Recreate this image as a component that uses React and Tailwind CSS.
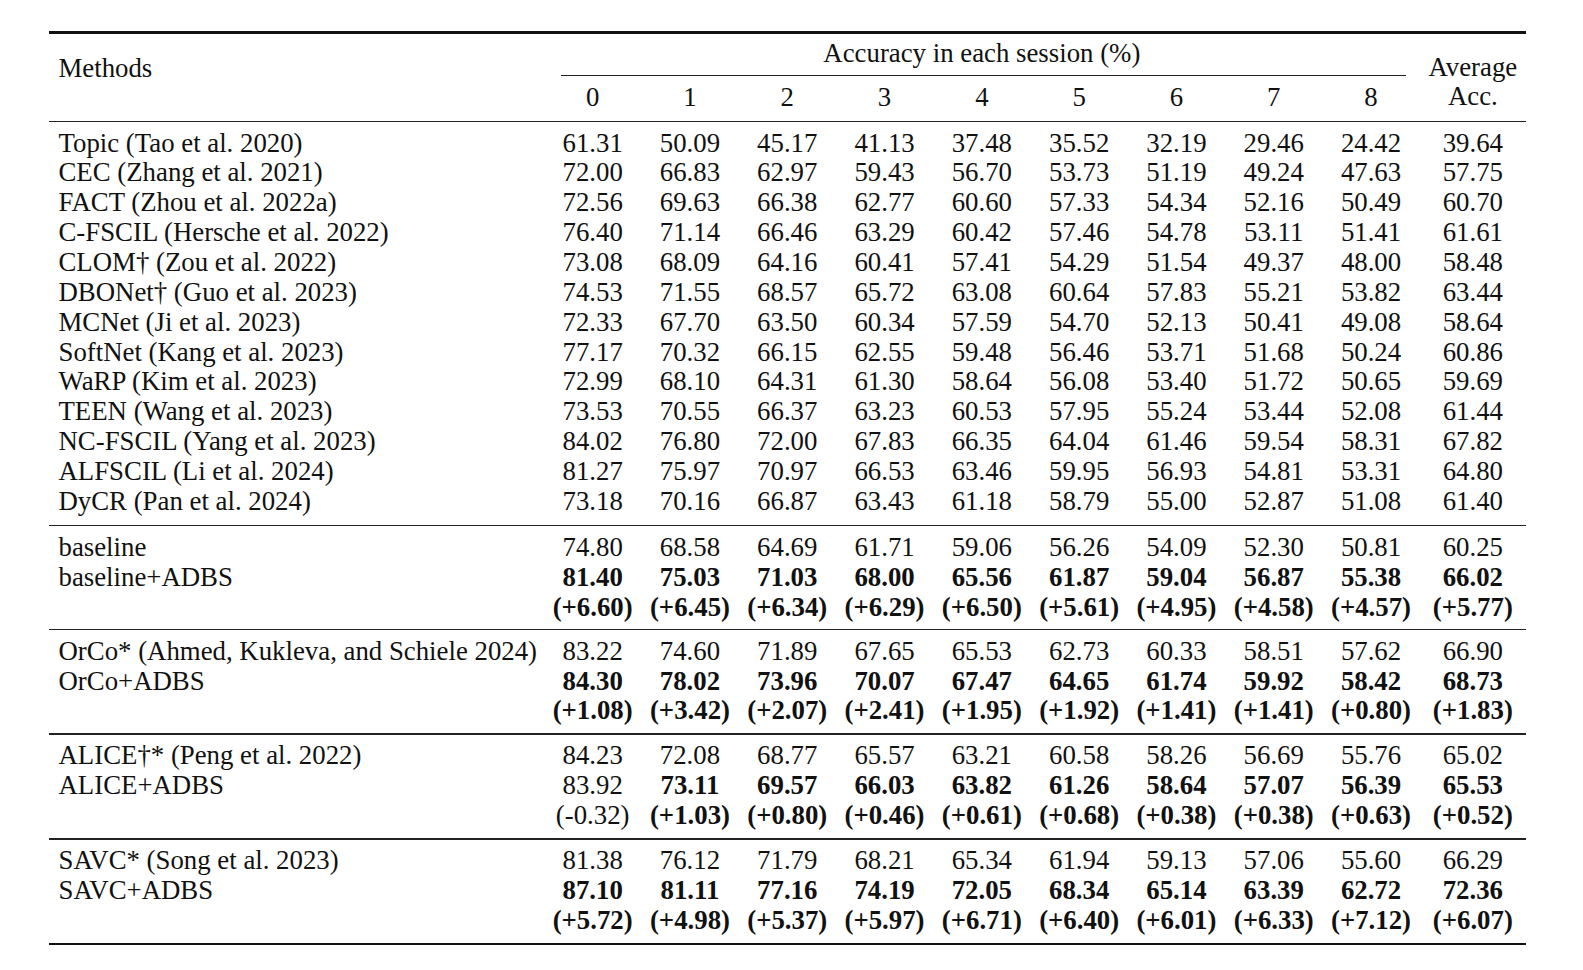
import React from 'react';

// session accuracy table, grouped in blocks separated by rules
const groups = [
  {
    pb: 'pb-[8.7px]',
    rows: [
      { name: 'Topic (Tao et al. 2020)', vals: ['61.31', '50.09', '45.17', '41.13', '37.48', '35.52', '32.19', '29.46', '24.42', '39.64'] },
      { name: 'CEC (Zhang et al. 2021)', vals: ['72.00', '66.83', '62.97', '59.43', '56.70', '53.73', '51.19', '49.24', '47.63', '57.75'] },
      { name: 'FACT (Zhou et al. 2022a)', vals: ['72.56', '69.63', '66.38', '62.77', '60.60', '57.33', '54.34', '52.16', '50.49', '60.70'] },
      { name: 'C-FSCIL (Hersche et al. 2022)', vals: ['76.40', '71.14', '66.46', '63.29', '60.42', '57.46', '54.78', '53.11', '51.41', '61.61'] },
      { name: 'CLOM† (Zou et al. 2022)', vals: ['73.08', '68.09', '64.16', '60.41', '57.41', '54.29', '51.54', '49.37', '48.00', '58.48'] },
      { name: 'DBONet† (Guo et al. 2023)', vals: ['74.53', '71.55', '68.57', '65.72', '63.08', '60.64', '57.83', '55.21', '53.82', '63.44'] },
      { name: 'MCNet (Ji et al. 2023)', vals: ['72.33', '67.70', '63.50', '60.34', '57.59', '54.70', '52.13', '50.41', '49.08', '58.64'] },
      { name: 'SoftNet (Kang et al. 2023)', vals: ['77.17', '70.32', '66.15', '62.55', '59.48', '56.46', '53.71', '51.68', '50.24', '60.86'] },
      { name: 'WaRP (Kim et al. 2023)', vals: ['72.99', '68.10', '64.31', '61.30', '58.64', '56.08', '53.40', '51.72', '50.65', '59.69'] },
      { name: 'TEEN (Wang et al. 2023)', vals: ['73.53', '70.55', '66.37', '63.23', '60.53', '57.95', '55.24', '53.44', '52.08', '61.44'] },
      { name: 'NC-FSCIL (Yang et al. 2023)', vals: ['84.02', '76.80', '72.00', '67.83', '66.35', '64.04', '61.46', '59.54', '58.31', '67.82'] },
      { name: 'ALFSCIL (Li et al. 2024)', vals: ['81.27', '75.97', '70.97', '66.53', '63.46', '59.95', '56.93', '54.81', '53.31', '64.80'] },
      { name: 'DyCR (Pan et al. 2024)', vals: ['73.18', '70.16', '66.87', '63.43', '61.18', '58.79', '55.00', '52.87', '51.08', '61.40'] },
    ],
  },
  {
    pb: 'pb-[6.75px]',
    rows: [
      { name: 'baseline', vals: ['74.80', '68.58', '64.69', '61.71', '59.06', '56.26', '54.09', '52.30', '50.81', '60.25'] },
      { name: 'baseline+ADBS', boldFrom: 0, vals: ['81.40', '75.03', '71.03', '68.00', '65.56', '61.87', '59.04', '56.87', '55.38', '66.02'] },
      { name: '', boldFrom: 0, vals: ['(+6.60)', '(+6.45)', '(+6.34)', '(+6.29)', '(+6.50)', '(+5.61)', '(+4.95)', '(+4.58)', '(+4.57)', '(+5.77)'] },
    ],
  },
  {
    pb: 'pb-[7.65px]',
    rows: [
      { name: 'OrCo* (Ahmed, Kukleva, and Schiele 2024)', vals: ['83.22', '74.60', '71.89', '67.65', '65.53', '62.73', '60.33', '58.51', '57.62', '66.90'] },
      { name: 'OrCo+ADBS', boldFrom: 0, vals: ['84.30', '78.02', '73.96', '70.07', '67.47', '64.65', '61.74', '59.92', '58.42', '68.73'] },
      { name: '', boldFrom: 0, vals: ['(+1.08)', '(+3.42)', '(+2.07)', '(+2.41)', '(+1.95)', '(+1.92)', '(+1.41)', '(+1.41)', '(+0.80)', '(+1.83)'] },
    ],
  },
  {
    pb: 'pb-[7.65px]',
    rows: [
      { name: 'ALICE†* (Peng et al. 2022)', vals: ['84.23', '72.08', '68.77', '65.57', '63.21', '60.58', '58.26', '56.69', '55.76', '65.02'] },
      { name: 'ALICE+ADBS', boldFrom: 1, vals: ['83.92', '73.11', '69.57', '66.03', '63.82', '61.26', '58.64', '57.07', '56.39', '65.53'] },
      { name: '', boldFrom: 1, vals: ['(-0.32)', '(+1.03)', '(+0.80)', '(+0.46)', '(+0.61)', '(+0.68)', '(+0.38)', '(+0.38)', '(+0.63)', '(+0.52)'] },
    ],
  },
  {
    pb: 'pb-[7.65px]',
    rows: [
      { name: 'SAVC* (Song et al. 2023)', vals: ['81.38', '76.12', '71.79', '68.21', '65.34', '61.94', '59.13', '57.06', '55.60', '66.29'] },
      { name: 'SAVC+ADBS', boldFrom: 0, vals: ['87.10', '81.11', '77.16', '74.19', '72.05', '68.34', '65.14', '63.39', '62.72', '72.36'] },
      { name: '', boldFrom: 0, vals: ['(+5.72)', '(+4.98)', '(+5.37)', '(+5.97)', '(+6.71)', '(+6.40)', '(+6.01)', '(+6.33)', '(+7.12)', '(+6.07)'] },
    ],
  },
];

const sessions = ['0', '1', '2', '3', '4', '5', '6', '7', '8'];

const Row = ({ row }) => (
  <div className="flex h-[29.87px] items-center leading-none">
    <div className="w-[495px] pl-[9.5px] whitespace-nowrap">{row.name}</div>
    {row.vals.map((v, i) => {
      const bold = row.boldFrom !== undefined && i >= row.boldFrom;
      const last = i === row.vals.length - 1;
      return (
        <div
          key={i}
          className={`${last ? 'w-[106.3px]' : 'w-[97.3px]'} text-center whitespace-nowrap ${bold ? 'font-bold' : ''}`}
        >
          {v}
        </div>
      );
    })}
  </div>
);

export default function App() {
  return (
    <div
      className="w-[1583px] h-[970px] bg-white text-[#111] text-[26.8px] pt-[31px]"
      style={{ fontFamily: '"Liberation Serif", "Times New Roman", serif' }}
    >
      <div className="ml-[49px] w-[1477px]">
        {/* top rule */}
        <div className="h-[2.5px] bg-[#111]" />

        {/* header */}
        <div className="flex h-[87px] leading-none">
          <div className="w-[495px] pl-[9.5px] pt-[20px]">
            <div className="h-[30px] flex items-center">Methods</div>
          </div>
          <div className="w-[875.7px] pt-[4.5px]">
            <div className="h-[30px] flex items-center justify-center">Accuracy in each session (%)</div>
            <div className="h-px bg-[#222] mt-[7px] mb-[6.5px] ml-[17px] mr-[14px]" />
            <div className="flex h-[30px] items-center">
              {sessions.map((s) => (
                <div key={s} className="w-[97.3px] text-center">{s}</div>
              ))}
            </div>
          </div>
          <div className="w-[106.3px] pt-[19px] text-center">
            <div className="h-[29px] flex items-center justify-center">Average</div>
            <div className="h-[29px] flex items-center justify-center">Acc.</div>
          </div>
        </div>

        {groups.map((g, gi) => (
          <div key={gi}>
            <div className="h-[1.5px] bg-[#222]" />
            <div className={`pt-[6px] ${g.pb}`}>
              {g.rows.map((r, ri) => (
                <Row key={ri} row={r} />
              ))}
            </div>
          </div>
        ))}

        {/* bottom rule */}
        <div className="h-[2.5px] bg-[#111]" />
      </div>
    </div>
  );
}
